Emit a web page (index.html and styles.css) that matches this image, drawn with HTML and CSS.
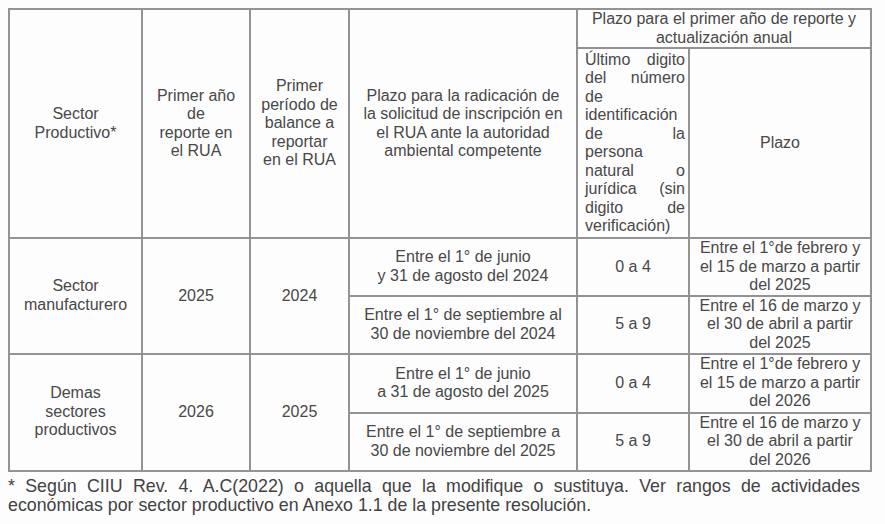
FILE: index.html
```html
<!DOCTYPE html>
<html lang="es">
<head>
<meta charset="utf-8">
<title>Plazos RUA</title>
<link rel="stylesheet" href="styles.css">
</head>
<body>
<table class="plazos">
  <colgroup>
    <col class="c1"><col class="c2"><col class="c3"><col class="c4"><col class="c5"><col class="c6">
  </colgroup>
  <tr class="h1">
    <td rowspan="2">Sector<br>Productivo*</td>
    <td rowspan="2">Primer año<br>de<br>reporte en<br>el RUA</td>
    <td rowspan="2">Primer<br>período de<br>balance a<br>reportar<br>en el RUA</td>
    <td rowspan="2">Plazo para la radicación de<br>la solicitud de inscripción en<br>el RUA ante la autoridad<br>ambiental competente</td>
    <td colspan="2">Plazo para el primer año de reporte y<br>actualización anual</td>
  </tr>
  <tr class="h2">
    <td class="just">
      <span class="ln">Último digito</span>
      <span class="ln">del número</span>
      <span class="ln">de</span>
      <span class="ln">identificación</span>
      <span class="ln">de la</span>
      <span class="ln">persona</span>
      <span class="ln">natural o</span>
      <span class="ln">jurídica (sin</span>
      <span class="ln">digito de</span>
      <span class="ln">verificación)</span>
    </td>
    <td>Plazo</td>
  </tr>
  <tr class="b1">
    <td rowspan="2">Sector<br>manufacturero</td>
    <td rowspan="2">2025</td>
    <td rowspan="2">2024</td>
    <td>Entre el 1° de junio<br>y 31 de agosto del 2024</td>
    <td>0 a 4</td>
    <td>Entre el 1°de febrero y<br>el 15 de marzo a partir<br>del 2025</td>
  </tr>
  <tr class="b2">
    <td>Entre el 1° de septiembre al<br>30 de noviembre del 2024</td>
    <td>5 a 9</td>
    <td>Entre el 16 de marzo y<br>el 30 de abril a partir<br>del 2025</td>
  </tr>
  <tr class="b3">
    <td rowspan="2">Demas<br>sectores<br>productivos</td>
    <td rowspan="2">2026</td>
    <td rowspan="2">2025</td>
    <td>Entre el 1° de junio<br>a 31 de agosto del 2025</td>
    <td>0 a 4</td>
    <td>Entre el 1°de febrero y<br>el 15 de marzo a partir<br>del 2026</td>
  </tr>
  <tr class="b4">
    <td>Entre el 1° de septiembre a<br>30 de noviembre del 2025</td>
    <td>5 a 9</td>
    <td>Entre el 16 de marzo y<br>el 30 de abril a partir<br>del 2026</td>
  </tr>
</table>
<p class="nota">
  <span class="ln">* Según CIIU Rev. 4. A.C(2022) o aquella que la modifique o sustituya. Ver rangos de actividades</span>
  <span class="last">económicas por sector productivo en Anexo 1.1 de la presente resolución.</span>
</p>
</body>
</html>
```

FILE: styles.css
```css
html, body {
  background: #fdfdfd;
}
body {
  margin: 8px;
  font-family: "Liberation Sans", Arial, sans-serif;
  color: #484848;
}
.plazos {
  border-collapse: collapse;
  table-layout: fixed;
  width: 864px;
  font-size: 16px;
  line-height: 18.5px;
}
.c1 { width: 133px; }
.c2 { width: 108px; }
.c3 { width: 99px; }
.c4 { width: 228px; }
.c5 { width: 112px; }
.c6 { width: 182px; }
.plazos td {
  border: 2px solid #939393;
  padding: 0 6px;
  text-align: center;
  vertical-align: middle;
}
.h1 { height: 38px; }
.h2 { height: 190px; }
.b1 { height: 57px; }
.b2 { height: 58px; }
.b3 { height: 59px; }
.b4 { height: 58px; }
.plazos td.just {
  text-align: left;
  padding: 0 3px 0 7px;
}
.ln {
  display: block;
  text-align: justify;
  text-align-last: justify;
}
.nota {
  margin: 5px 0 0 0;
  width: 852px;
  font-size: 17.8px;
  line-height: 19px;
  color: #424242;
}
.last {
  display: block;
}
```
